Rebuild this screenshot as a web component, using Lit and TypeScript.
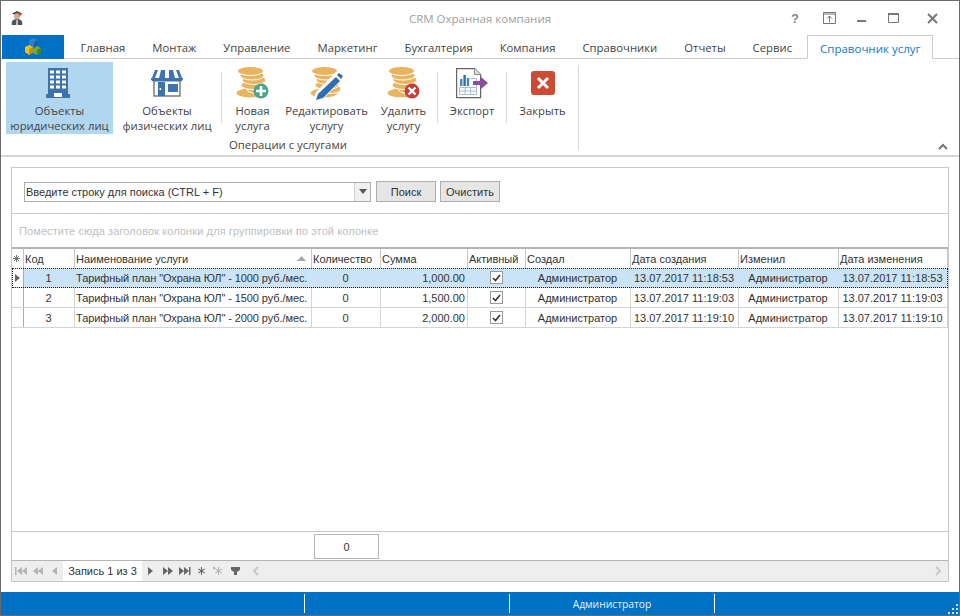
import { LitElement, html, css, svg } from 'lit';
import { customElement } from 'lit/decorators.js';

const tabs = ['Главная', 'Монтаж', 'Управление', 'Маркетинг', 'Бухгалтерия', 'Компания', 'Справочники', 'Отчеты', 'Сервис'];

const columns = [
  { title: 'Код' },
  { title: 'Наименование услуги', sort: true },
  { title: 'Количество' },
  { title: 'Сумма' },
  { title: 'Активный' },
  { title: 'Создал' },
  { title: 'Дата создания' },
  { title: 'Изменил' },
  { title: 'Дата изменения' },
];

const rows = [
  { id: 1, name: 'Тарифный план "Охрана ЮЛ" - 1000 руб./мес.', sum: '1,000.00', created: '13.07.2017 11:18:53', changed: '13.07.2017 11:18:53' },
  { id: 2, name: 'Тарифный план "Охрана ЮЛ" - 1500 руб./мес.', sum: '1,500.00', created: '13.07.2017 11:19:03', changed: '13.07.2017 11:19:03' },
  { id: 3, name: 'Тарифный план "Охрана ЮЛ" - 2000 руб./мес.', sum: '2,000.00', created: '13.07.2017 11:19:10', changed: '13.07.2017 11:19:10' },
];

const coins = svg`
  <g fill="#e9b45f" stroke="#fff" stroke-width="1">
    <ellipse cx="17" cy="27" rx="14" ry="5"/>
    <ellipse cx="24" cy="23" rx="10" ry="4.5"/>
    <ellipse cx="20" cy="19" rx="12" ry="4.5"/>
    <ellipse cx="21" cy="14" rx="12" ry="4.5"/>
    <ellipse cx="19" cy="9.500" rx="12" ry="4.5"/>
    <ellipse cx="17.500" cy="5" rx="13" ry="4.5"/>
  </g>`;

const icons = {
  building: html`<svg width="40" height="40" viewBox="0 0 40 40">
    <path fill="#3d72ad" d="M8 2h20v26h2v4H6v-4h2z"/>
    <g fill="#fff">
      ${[0, 1, 2, 3].flatMap((r) => [0, 1, 2].map((c) => svg`<rect x="${10 + c * 6}" y="${4.5 + r * 5}" width="4" height="3"/>`))}
      <rect x="14" y="27" width="8" height="4"/>
    </g>
  </svg>`,
  store: html`<svg width="40" height="40" viewBox="0 0 40 40">
    <path fill="none" stroke="#777" stroke-width="1.4" d="M7 14v16h26V14"/>
    <path fill="#3d72ad" d="M8 4h24l3 8H5z"/>
    <g fill="#fff"><path d="M11 4h3l-2 8H8zM18 4h4v8h-4zM26 4h3l3 8h-4z"/></g>
    <path fill="#3d72ad" d="M4 12h32v1.500a3 3 0 0 1-3 2H7a3 3 0 0 1-3-2z"/>
    <rect x="11" y="16" width="7" height="14" fill="#3d72ad"/>
    <rect x="12.500" y="22" width="1.600" height="2" fill="#fff"/>
    <rect x="21" y="18" width="10" height="8" fill="#3d72ad"/>
  </svg>`,
  add: html`<svg width="40" height="40" viewBox="0 0 40 40">${coins}
    <circle cx="28" cy="25" r="7.5" fill="#4ea585"/>
    <path fill="#fff" d="M26.700 20h2.600v3.700H33v2.600h-3.700V30h-2.600v-3.700H23v-2.600h3.700z"/>
  </svg>`,
  edit: html`<svg width="40" height="40" viewBox="0 0 40 40">${coins}
    <path fill="#fff" d="M6 36l3-10L29 6l7 7-20 20z"/>
    <path fill="#2f6fb0" d="M9 34l2-6 18-17 4 4-17 17z"/>
    <path fill="#2f6fb0" d="M30 9l2-2 4 3-2 3z"/>
  </svg>`,
  remove: html`<svg width="40" height="40" viewBox="0 0 40 40">${coins}
    <circle cx="28" cy="25" r="7.5" fill="#c5403a"/>
    <path stroke="#fff" stroke-width="2.400" d="M24.500 21.500l7 7M31.500 21.500l-7 7"/>
  </svg>`,
  exportFile: html`<svg width="40" height="40" viewBox="0 0 40 40">
    <path fill="#fff" stroke="#666" stroke-width="1.200" d="M4.600 2.600h18l6 6v23h-24z"/>
    <path fill="#ddd" stroke="#888" d="M22.600 2.600v6h6"/>
    <rect x="8" y="13" width="2.400" height="7" fill="#4a86bd"/>
    <rect x="11.400" y="9" width="2.400" height="11" fill="#2f6fa5"/>
    <rect x="14.800" y="12" width="2.400" height="8" fill="#4a86bd"/>
    <path fill="none" stroke="#a9bcd9" d="M7.500 21.500h17v7h-17zM7.500 25h17M13 21.500v7M18.500 21.500v7M18.500 12.500h6v9"/>
    <path fill="#8f4aa8" d="M21 15h8v-4l7 6-7 6v-4h-8z"/>
  </svg>`,
  close: html`<svg width="40" height="40" viewBox="0 0 40 40">
    <rect x="8" y="5" width="24" height="24" rx="3" fill="#cc4b32"/>
    <path stroke="#fff" stroke-width="3" d="M15 12l10 10M25 12l-10 10"/>
  </svg>`,
};

const navIcon = (d: string, off = false) => html`<svg class="nav-icon" width="17" height="12" viewBox="0 0 17 12">
  <path fill="${off ? '#b4b4b4' : '#666'}" d="${d}"/>
</svg>`;

@customElement('app-root')
export class AppRoot extends LitElement {
  static styles = css`
    :host {
      display: block;
      width: 960px;
      height: 616px;
      font-family: 'Open Sans', 'Noto Sans', sans-serif;
      color: #444;
    }
    .window {
      box-sizing: border-box;
      width: 960px;
      height: 616px;
      border: 1px solid #6a6a6a;
      background: #fff;
      display: flex;
      flex-direction: column;
      overflow: hidden;
      font-size: 11.300px;
    }
    .title {
      height: 34px;
      flex: none;
      display: grid;
      grid-template-columns: 1fr auto 1fr;
      align-items: center;
    }
    .logo { padding-left: 9px; display: flex; }
    .title-text { color: #a0a0a0; font-size: 11.500px; }
    .controls { display: flex; justify-content: flex-end; align-items: center; padding-right: 21px; gap: 15px; color: #777; }
    .controls svg { display: block; }
    .help { margin-right: 3px; }
    .pin { margin-left: 5px; }
    .minimize { margin-left: 5px; margin-top: 5px; }
    .maximize { margin-left: 7px; }
    .shut { margin-left: 12px; }
    .tabs {
      height: 23px;
      flex: none;
      display: flex;
      border-bottom: 1px solid #ccc;
      padding-left: 1px;
    }
    .file { flex: none; width: 62px; background: #0072c6; display: flex; align-items: center; justify-content: center; margin-right: 3px; margin-bottom: -1px; }
    .tab { flex: none; padding: 1px 13.500px 0; line-height: 24px; color: #444; white-space: nowrap; }
    .tab.active {
      margin-left: 1.500px;
      padding: 1px 12px 0;
      font-size: 11.500px;
      color: #0f7ad0;
      border: 1px solid #ccc;
      border-bottom: 1px solid #fff;
      margin-bottom: -1px;
      background: #fff;
    }
    .ribbon {
      height: 98px;
      flex: none;
      box-sizing: border-box;
      display: flex;
      padding: 3px 0 0 5px;
      border-bottom: 2px solid #d4d4d4;
      position: relative;
    }
    .rb {
      display: flex;
      flex-direction: column;
      align-items: center;
      box-sizing: border-box;
      height: 72px;
      line-height: 15px;
      text-align: center;
      flex: none;
    }
    .rb svg { display: block; margin-top: 4px; margin-bottom: -3px; flex: none; }
    .rb span { display: block; white-space: nowrap; }
    .rb.active { background: #b1d6f0; }
    .w107 { width: 107px; }
    .w108 { width: 108px; }
    .w61 { width: 61px; }
    .w87 { width: 87px; }
    .w67 { width: 67px; }
    .w68 { width: 68px; }
    .w71 { width: 71px; }
    .sep { width: 1px; background: #d9d9d9; height: 51px; margin-top: 10px; flex: none; }
    .group { display: flex; flex-direction: column; flex: none; }
    .group-row { display: flex; }
    .caption { line-height: 16px; padding-left: 7px; margin-top: 3px; }
    .sep.tall { height: 85px; margin-top: 3px; }
    .collapse { position: absolute; right: 11px; bottom: 5px; }
    .content { flex: 1; display: flex; flex-direction: column; padding: 10px; min-height: 0; }
    .panel {
      flex: 1;
      display: flex;
      flex-direction: column;
      min-height: 0;
      border: 1px solid #c8c8c8;
      font-family: 'Liberation Sans', sans-serif;
      font-size: 11px;
      color: #333;
    }
    .search { height: 46px; flex: none; box-sizing: border-box; display: flex; align-items: center; padding: 2px 0 0 12px; border-bottom: 1px solid #c8c8c8; }
    .combo { box-sizing: border-box; width: 347px; height: 20px; border: 1px solid #abadb3; display: flex; align-items: center; }
    .combo span { flex: 1; padding-left: 1px; }
    .combo i { width: 15px; height: 18px; border-left: 1px solid #d0d0d0; display: flex; align-items: center; justify-content: center; background: #f0f0f0; }
    .btn { box-sizing: border-box; height: 21px; border: 1px solid #adadad; background: #e6e6e6; display: flex; align-items: center; justify-content: center; }
    .b1 { width: 60px; margin-left: 5px; }
    .b2 { width: 60px; margin-left: 4px; }
    .group-hint { height: 35px; flex: none; box-sizing: border-box; display: flex; align-items: center; padding-left: 7px; color: #c0c0c0; letter-spacing: 0.1px; border-bottom: 2px solid #b4b4b4; }
    .grid { flex: 1; display: flex; flex-direction: column; min-height: 0; }
    .row { display: grid; grid-template-columns: 12px 51px 237px 69px 87px 58px 105px 108px 100px 109px; height: 20px; box-sizing: border-box; border-bottom: 1px solid #d4d4d4; flex: none; }
    .row > div { box-sizing: border-box; border-right: 1px solid #d4d4d4; padding: 0 2px 0 1px; display: flex; align-items: center; white-space: nowrap; overflow: hidden; min-width: 0; }
    .row.head { height: 19px; border-bottom: 0; }
    .row.head > div { border-right-color: #c8c8c8; justify-content: space-between; }
    .row > .ind { padding: 0; justify-content: center; border-right: 1px solid #aaa; color: #666; }
    .row.selected { outline: 1px dotted #222; outline-offset: -1px; background: #cae3f6; }
    .row.selected > div { border-right-color: #cae3f6; }
    .row.selected > .ind { background: #fff; border-right-color: #aaa; }
    .row .c { justify-content: center; }
    .row .r { justify-content: flex-end; }
    .row .name { letter-spacing: -0.09px; }
    .check { box-sizing: border-box; width: 13px; height: 13px; border: 1px solid #999; background: #fff; display: flex; align-items: center; justify-content: center; }
    .sort { margin-right: 3px; }
    .spacer { flex: 1; }
    .summary { height: 30px; flex: none; box-sizing: border-box; border-top: 1px solid #c8c8c8; border-bottom: 1px solid #b4b4b4; padding: 2px 0 0 302px; }
    .summary div { box-sizing: border-box; width: 65px; height: 25px; border: 1px solid #b4b4b4; display: flex; align-items: center; justify-content: center; }
    .nav { height: 20px; flex: none; background: #eee; display: flex; align-items: center; }
    .nav-icon { display: block; flex: none; }
    .nav .rec { background: #fff; width: 79px; height: 20px; display: flex; align-items: center; justify-content: center; }
    .nav .left { display: flex; width: 51px; }
    .nav .more { display: flex; }
    .nav .track { flex: 1; display: flex; justify-content: space-between; align-items: center; padding: 0 3px 0 6px; }
    .status { height: 23px; flex: none; background: #0072c6; color: #e6f1fa; display: grid; grid-template-columns: 304px 205px 205px 1fr; position: relative; }
    .status div { border-right: 1px solid #fff; margin: 2px 0; display: flex; align-items: center; justify-content: center; font-size: 10.300px; }
    .status div:last-of-type { border-right: 0; }
    .grip { position: absolute; right: 1px; bottom: 1px; }
  `;

  render() {
    return html`
      <div class="window">
        ${this.renderTitle()}
        <div class="tabs">
          <div class="file">
            <svg width="20" height="20" viewBox="0 0 20 20">
              <path fill="#2e7fd0" d="M6 3l5-2 4 2v5l-4 3-5-2z"/>
              <path fill="#1c5ea8" d="M11 5l4-2v5l-4 3z"/>
              <path fill="#e8c120" d="M2 10l4-2 4 2v5l-4 3-4-3z"/>
              <path fill="#c08f12" d="M6 12l4-2v5l-4 3z"/>
              <path fill="#6cae3a" d="M10 12l4-3 4 2v5l-4 2-4-2z"/>
              <path fill="#3f8626" d="M14 13l4-2v5l-4 2z"/>
            </svg>
          </div>
          ${tabs.map((t) => html`<div class="tab">${t}</div>`)}
          <div class="tab active">Справочник услуг</div>
        </div>
        ${this.renderRibbon()}
        <div class="content">
          <div class="panel">
            <div class="search">
              <div class="combo">
                <span>Введите строку для поиска (CTRL + F)</span>
                <i><svg width="8" height="5"><path d="M0 0h8L4 5z" fill="#555"/></svg></i>
              </div>
              <div class="btn b1">Поиск</div>
              <div class="btn b2">Очистить</div>
            </div>
            <div class="group-hint">Поместите сюда заголовок колонки для группировки по этой колонке</div>
            ${this.renderGrid()}
            <div class="summary"><div>0</div></div>
            ${this.renderNav()}
          </div>
        </div>
        <div class="status">
          <div></div><div></div><div>Администратор</div><div></div>
          <svg class="grip" width="10" height="10" viewBox="0 0 10 10">
            <path fill="#cfe3f3" d="M8 0h2v2H8zM4 4h2v2H4zM8 4h2v2H8zM0 8h2v2H0zM4 8h2v2H4zM8 8h2v2H8z"/>
          </svg>
        </div>
      </div>
    `;
  }

  private renderTitle() {
    return html`
      <div class="title">
        <div class="logo">
          <svg width="14" height="16" viewBox="0 0 16 18">
            <path fill="#444" d="M2 4l6-3 6 3-6 2z"/>
            <circle cx="8" cy="7" r="3.500" fill="#d9a98c"/>
            <path fill="#c0392b" d="M10 3h3v3h-3z"/>
            <path fill="#4d5560" d="M2 17v-3a6 4 0 0 1 12 0v3z"/>
            <path fill="#ccc" d="M7 11h2v6H7z"/>
          </svg>
        </div>
        <div class="title-text">CRM Охранная компания</div>
        <div class="controls">
          <svg class="help" width="10" height="14" viewBox="0 0 10 14"><text x="1" y="12" font-size="13" font-weight="700" font-family="Liberation Sans" fill="#888">?</text></svg>
          <svg class="pin" width="14" height="14" viewBox="0 0 14 14"><path fill="none" stroke="#777" d="M.5 1.500h12v11H.5zM.5 3h12M6.500 11V5M4 7.500l2.500-2.500L9 7.500"/></svg>
          <svg class="minimize" width="9" height="4" viewBox="0 0 9 4"><path fill="#777" d="M0 1h9v2H0z"/></svg>
          <svg class="maximize" width="12" height="12" viewBox="0 0 12 12"><path fill="none" stroke="#777" d="M.5 1.500h10v9H.5z"/><path fill="#777" d="M0 1h11v2H0z"/></svg>
          <svg class="shut" width="11" height="11" viewBox="0 0 11 11"><path stroke="#777" stroke-width="2" d="M1 1l9 9M10 1l-9 9"/></svg>
        </div>
      </div>
    `;
  }

  private renderRibbon() {
    return html`
      <div class="ribbon">
        <div class="rb active w107">${icons.building}<span>Объекты</span><span>юридических лиц</span></div>
        <div class="rb w108">${icons.store}<span>Объекты</span><span>физических лиц</span></div>
        <div class="sep"></div>
        <div class="group">
          <div class="group-row">
            <div class="rb w61">${icons.add}<span>Новая</span><span>услуга</span></div>
            <div class="rb w87">${icons.edit}<span>Редактировать</span><span>услугу</span></div>
            <div class="rb w67">${icons.remove}<span>Удалить</span><span>услугу</span></div>
          </div>
          <div class="caption">Операции с услугами</div>
        </div>
        <div class="sep"></div>
        <div class="rb w68">${icons.exportFile}<span>Экспорт</span></div>
        <div class="sep"></div>
        <div class="rb w71">${icons.close}<span>Закрыть</span></div>
        <div class="sep tall"></div>
        <svg class="collapse" width="10" height="7" viewBox="0 0 10 7"><path fill="none" stroke="#777" stroke-width="2" d="M1 6l4-4 4 4"/></svg>
      </div>
    `;
  }

  private renderGrid() {
    return html`
      <div class="grid">
        <div class="row head">
          <div class="ind">
            <svg width="9" height="9" viewBox="0 0 9 9"><path stroke="#777" d="M4.500 1v7M1 4.500h7M2 2l5 5M7 2l-5 5"/></svg>
          </div>
          ${columns.map((c) => html`<div>${c.title}${c.sort
            ? html`<svg class="sort" width="9" height="5"><path d="M0 5h9L4.500 0z" fill="#a8a8a8"/></svg>`
            : null}</div>`)}
        </div>
        ${rows.map((r, i) => html`
          <div class="row ${i === 0 ? 'selected' : ''}">
            <div class="ind">${i === 0 ? html`<svg width="5" height="8"><path d="M0 0l5 4-5 4z" fill="#666"/></svg>` : null}</div>
            <div class="c">${r.id}</div>
            <div class="name">${r.name}</div>
            <div class="c">0</div>
            <div class="r">${r.sum}</div>
            <div class="c"><span class="check"><svg width="9" height="8" viewBox="0 0 9 8"><path fill="none" stroke="#333" stroke-width="1.600" d="M1 4l2.500 2.500L8 1"/></svg></span></div>
            <div class="c">Администратор</div>
            <div class="c">${r.created}</div>
            <div class="c">Администратор</div>
            <div class="c">${r.changed}</div>
          </div>
        `)}
        <div class="spacer"></div>
      </div>
    `;
  }

  private renderNav() {
    return html`
      <div class="nav">
        <div class="left">
          ${navIcon('M3 2h1.500v8H3zM10 2v8L5 6zM15 2v8l-5-4z', true)}
          ${navIcon('M9 2v8L4 6zM14 2v8L9 6z', true)}
          ${navIcon('M11 2v8L6 6z', true)}
        </div>
        <div class="rec">Запись 1 из 3</div>
        <div class="more">
          ${navIcon('M6 2v8l5-4z')}
          ${navIcon('M4 2v8l5-4zM9 2v8l5-4z')}
          ${navIcon('M3 2v8l5-4zM8 2v8l5-4zM13 2h1.500v8H13z')}
          ${navIcon('M8 2h1v3l2.500-1.500.5.800L9.500 6 12 7.700l-.5.800L9 7v3H8V7L5.500 8.500 5 7.700 7.500 6 5 4.300l.5-.800L8 5z')}
          ${navIcon('M8 2h1v3l2.500-1.500.5.800L9.500 6 12 7.700l-.5.800L9 7v3H8V7L5.500 8.500 5 7.700 7.500 6 5 4.300l.5-.800L8 5zM3 2h2v2H3z', true)}
          ${navIcon('M4 2h9v3l-3 2v3H7V7L4 5z')}
        </div>
        <div class="track">
          <svg width="14" height="10" viewBox="0 0 14 10"><path fill="none" stroke="#c8c8c8" stroke-width="2" d="M8 1L4 5l4 4"/></svg>
          <svg width="14" height="10" viewBox="0 0 14 10"><path fill="none" stroke="#c8c8c8" stroke-width="2" d="M5 1l4 4-4 4"/></svg>
        </div>
      </div>
    `;
  }
}
